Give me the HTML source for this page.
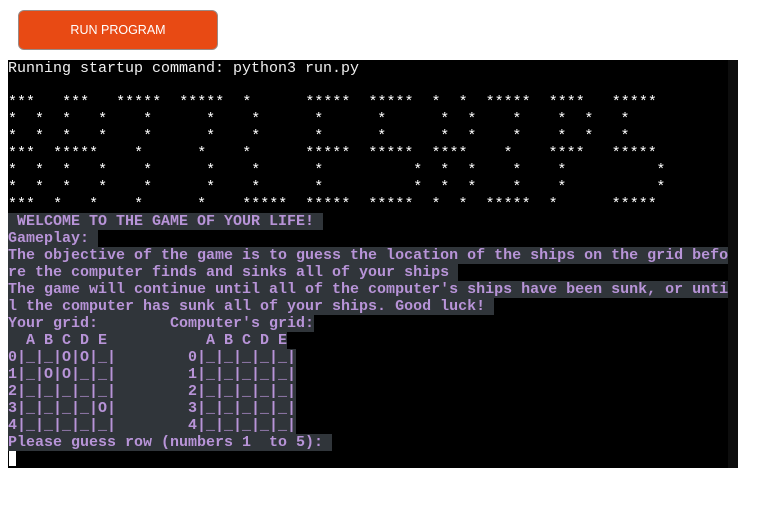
<!DOCTYPE html>
<html><head><meta charset="utf-8"><style>
body{margin:0;background:#fff;width:760px;height:510px;overflow:hidden;position:relative;font-family:"Liberation Sans",sans-serif}
.btn{position:absolute;left:18px;top:10px;width:198px;height:38px;background:#e84a14;border:1px solid #9a8a85;border-radius:6px;color:#fff;font-size:12.5px;text-align:center;line-height:38px}
.term{position:absolute;left:8px;top:60px;width:730px;height:408px;background:#000}
.sb{position:absolute;right:0;top:0;width:10px;height:408px;background:#0d0d0d}
pre{margin:0;position:absolute;left:0;top:0;font-family:"Liberation Mono",monospace;font-weight:bold;font-size:15px;line-height:17px;color:#b894d8}
.w{color:#f0f0f0;font-weight:normal}
.s{color:#fff;font-weight:normal}
.h{background:#30353a}
.cur{position:absolute;left:9px;top:451px;width:7px;height:15px;background:#fff;z-index:5}
</style></head><body>
<div class="btn">RUN PROGRAM</div>
<div class="term"><div class="sb"></div>
<pre><span class="w">Running startup command: python3 run.py</span>

<span id="art"></span><span class="h"> WELCOME TO THE GAME OF YOUR LIFE! </span>
<span class="h">Gameplay: </span>
<span class="h">The objective of the game is to guess the location of the ships on the grid befo</span>
<span class="h">re the computer finds and sinks all of your ships </span>
<span class="h">The game will continue until all of the computer's ships have been sunk, or unti</span>
<span class="h">l the computer has sunk all of your ships. Good luck! </span>
<span class="h">Your grid:        Computer's grid:</span>
<span class="h">  A B C D E           A B C D E</span>
<span class="h">0|_|_|O|O|_|        0|_|_|_|_|_|</span>
<span class="h">1|_|O|O|_|_|        1|_|_|_|_|_|</span>
<span class="h">2|_|_|_|_|_|        2|_|_|_|_|_|</span>
<span class="h">3|_|_|_|_|O|        3|_|_|_|_|_|</span>
<span class="h">4|_|_|_|_|_|        4|_|_|_|_|_|</span>
<span class="h">Please guess row (numbers 1  to 5): </span></pre>
</div>
<div class="cur"></div>
<script>
function row(c){var a=[];for(var i=0;i<73;i++)a.push(' ');c.forEach(function(x){a[x]='*'});var t=a.join('').replace(/\s+$/,'');return t.replace(/\*/g,'<span class="s">*</span>');}
function r(s){var o=[];s.split(',').forEach(function(p){var q=p.split('-');if(q.length>1){for(var i=+q[0];i<=+q[1];i++)o.push(i)}else o.push(+p)});return o;}
var A=r('0-2,6-8,12-16,19-23,26,33-37,40-44,47,50,53-57,60-63,67-71');
var B=r('0,3,6,10,15,22,27,34,41,48,51,56,61,64,68');
var C=r('0-2,5-9,14,21,26,33-37,40-44,47-50,55,60-63,67-71');
var D=r('0,3,6,10,15,22,27,34,45,48,51,56,61,72');
var E=r('0-2,5,9,14,21,26-30,33-37,40-44,47,50,53-57,60,67-71');
document.getElementById('art').innerHTML=[A,B,B,C,D,D,E].map(row).join('\n')+'\n';
</script>
</body></html>
